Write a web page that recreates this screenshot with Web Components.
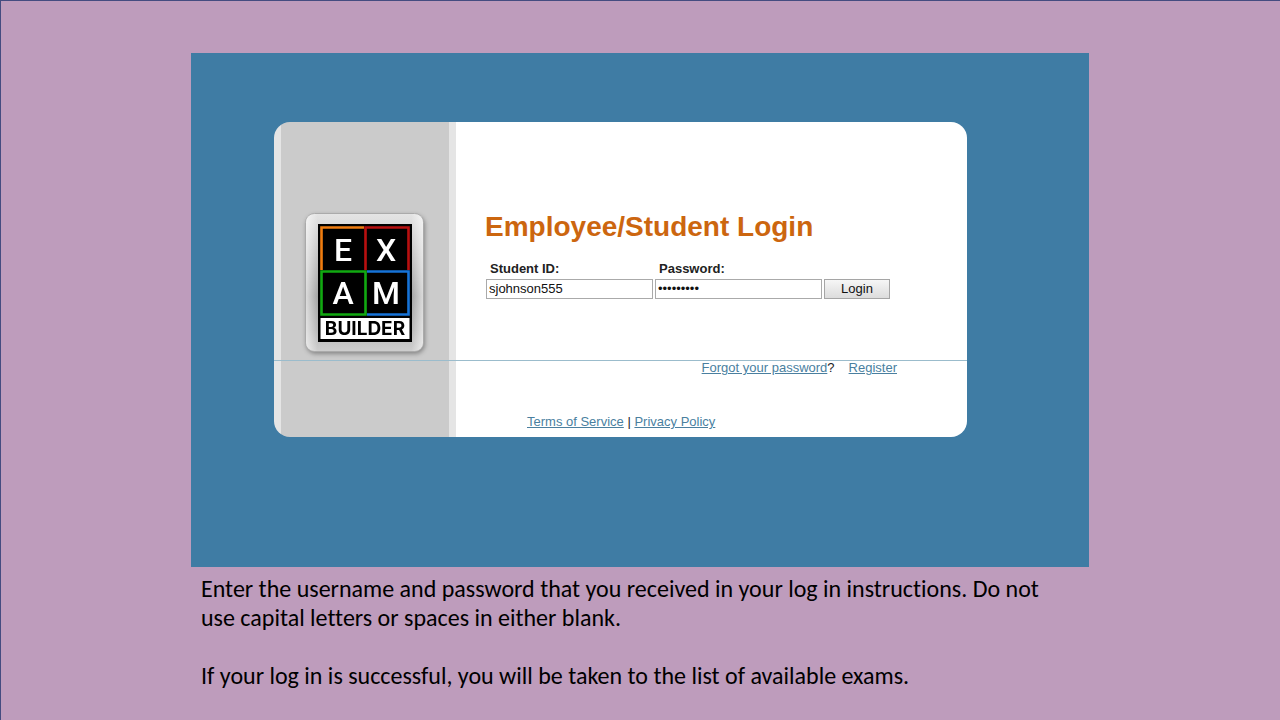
<!DOCTYPE html>
<html lang="en">
<head>
<meta charset="utf-8">
<meta name="viewport" content="width=device-width, initial-scale=1">
<title>Employee/Student Login</title>
<style>
  html { background: #be9cbc; }
  body { margin: 0; }
</style>
</head>
<body>
<guide-slide>
  <login-panel>
    <login-card>
      <exam-logo slot="logo"></exam-logo>
      <login-form slot="form"></login-form>
      <card-links slot="links"></card-links>
    </login-card>
  </login-panel>
  <slide-notes>
    <p>Enter the username and password that you received in your log in instructions. Do not use capital letters or spaces in either blank.</p>
    <p>If your log in is successful, you will be taken to the list of available exams.</p>
  </slide-notes>
</guide-slide>
<script>
const define = (name, markup) => customElements.define(name, class extends HTMLElement {
  constructor() {
    super();
    this.attachShadow({ mode: 'open' }).innerHTML = markup;
  }
});

define('guide-slide', `
<style>
  :host { display: block; box-sizing: border-box; min-height: 100vh; padding: 52px 17px 0 16px;
    border: solid #444c80; border-width: 1px 0 0 1px; background: #be9cbc; }
  main { max-width: 898px; margin: 0 auto; }
</style>
<main><slot></slot></main>`);

define('login-panel', `
<style>
  :host { display: block; padding: 69px 122px 130px 83px; background: #3f7ca4; }
</style>
<slot></slot>`);

define('login-card', `
<style>
  :host { display: block; border-radius: 16px; overflow: hidden; color: #222;
    font-family: "Liberation Sans", Arial, sans-serif;
    background: linear-gradient(90deg, #e5e5e5 7px, #cbcbcb 7px 175px, #e5e5e5 175px 182px, #fff 182px); }
  .top { display: grid; grid-template-columns: 182px 1fr; align-items: start;
    padding: 88px 0 4px; border-bottom: 1px solid #9bbccc; }
  .logo { padding-left: 28px; padding-top: 3px; }
  .bottom { padding-left: 182px; }
</style>
<div class="top">
  <div class="logo"><slot name="logo"></slot></div>
  <slot name="form"></slot>
</div>
<div class="bottom"><slot name="links"></slot></div>`);

define('exam-logo', `
<style>
  :host { display: block; height: 143px; }
  svg { display: block; overflow: visible; filter: drop-shadow(1px 2px 2px #0005); }
  text { font-family: Roboto, sans-serif; font-weight: 500; text-anchor: middle; }
  .name { font-family: Inter, sans-serif; font-weight: 700; }
</style>
<svg width="124" height="143" viewBox="0 0 124 143" role="img" aria-label="Exam Builder">
  <defs>
    <linearGradient id="metal" x1="0" y1="0" x2="0" y2="1">
      <stop offset="0" stop-color="#e4e4e4"/><stop offset=".2" stop-color="#cfcfcf"/>
      <stop offset=".6" stop-color="#a4a4a4"/><stop offset=".85" stop-color="#b8b8b8"/><stop offset="1" stop-color="#cecece"/>
    </linearGradient>
    <linearGradient id="sheen" x1="0" y1="0" x2="1" y2="0">
      <stop offset="0" stop-color="#fff" stop-opacity=".6"/><stop offset=".1" stop-color="#fff" stop-opacity="0"/>
      <stop offset=".9" stop-color="#fff" stop-opacity="0"/><stop offset="1" stop-color="#fff" stop-opacity=".6"/>
    </linearGradient>
  </defs>
  <rect x="3.5" y=".5" width="118" height="138" rx="9" fill="url(#metal)" stroke="#aaa"/>
  <rect x="4" y="1" width="117" height="137" rx="8" fill="url(#sheen)"/>
  <rect x="16" y="11" width="94" height="118"/>
  <g fill="none" stroke-width="2.6">
    <path d="M19.5 57V14.5H62" stroke="#f07d10"/>
    <path d="M63.5 57V14.5H106.5V57" stroke="#b80f0f"/>
    <path d="M65 58.5H106.5V101.5H65" stroke="#1673d8"/>
    <path d="M19.5 58.5H63.5V101.5H19.5Z" stroke="#11a911"/>
  </g>
  <g fill="#fff" font-size="32">
    <text x="41" y="48">E</text><text x="84" y="48">X</text>
    <text x="41" y="91">A</text><text x="84" y="91">M</text>
  </g>
  <rect x="18.5" y="105" width="89" height="21" fill="#fff"/>
  <text class="name" x="63" y="122" font-size="19">BUILDER</text>
</svg>`);

define('login-form', `
<style>
  :host { display: block; padding: 1px 0 0 29px; }
  h1 { margin: 0 0 18px; font-size: 28px; line-height: 32px; font-weight: bold; color: #cc660f; }
  form { display: flex; flex-wrap: wrap; gap: 2px; align-items: end; padding-left: 1px; }
  .field { display: flex; flex-direction: column; }
  label { padding-left: 4px; margin-bottom: 2px; font-size: 13px; line-height: 16px; font-weight: bold; }
  input { box-sizing: border-box; width: 167px; height: 20px; margin: 0; padding: 0 2px 1px;
    border: 1px solid #aaa; background: #fff; color: #111; font: 13px "Liberation Sans", Arial, sans-serif; }
  button { box-sizing: border-box; width: 66px; height: 20px; margin: 0; padding: 0 0 1px; border: 1px solid #a5a5a5;
    background: linear-gradient(#f6f6f6, #dcdcdc); color: #111; font: 13px "Liberation Sans", Arial, sans-serif; }
</style>
<h1>Employee/Student Login</h1>
<form onsubmit="return false">
  <div class="field"><label for="student">Student ID:</label><input id="student" type="text" value="sjohnson555"></div>
  <div class="field"><label for="pass">Password:</label><input id="pass" type="password" value="exam12345"></div>
  <button type="submit">Login</button>
</form>`);

define('card-links', `
<style>
  :host { display: block; font-size: 13px; line-height: 14px; }
  a { color: #4a7f9f; }
  .account { display: flex; justify-content: flex-end; gap: 14px; padding-right: 70px; }
  .legal { padding: 40px 0 8px 71px; }
</style>
<div class="account"><span><a href="#forgot">Forgot your password</a>?</span><a href="#register">Register</a></div>
<div class="legal"><a href="#terms">Terms of Service</a> | <a href="#privacy">Privacy Policy</a></div>`);

define('slide-notes', `
<style>
  :host { display: block; padding: 7px 24px 0 10px; color: #000; font-variant-ligatures: none;
    font-family: Carlito, Calibri, Lato, sans-serif; font-size: 24px; line-height: 29px; }
  ::slotted(p) { margin: 0 0 29px; }
</style>
<slot></slot>`);
</script>
</body>
</html>
